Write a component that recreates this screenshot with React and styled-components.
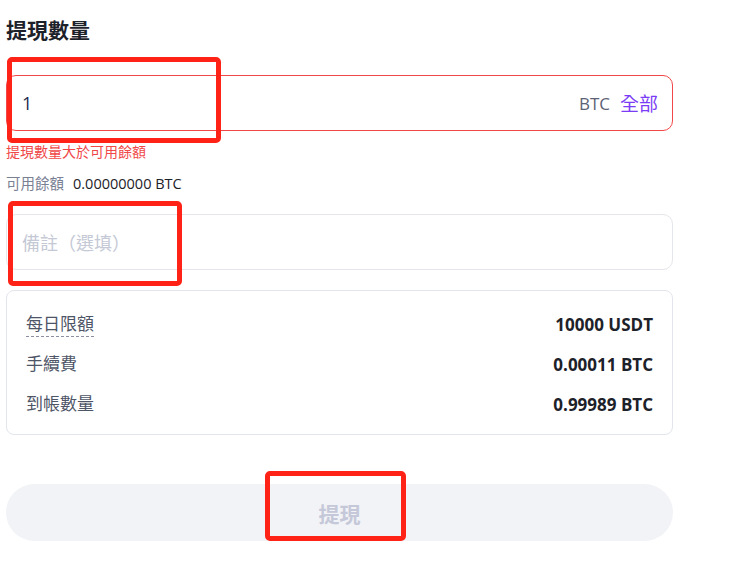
import React from "react";
import styled, { createGlobalStyle } from "styled-components";

const Global = createGlobalStyle`
  html, body { margin: 0; padding: 0; background: #ffffff; }
  body { font-family: "Open Sans", "Noto Sans CJK TC", sans-serif; color: #1d2129; }
  * { box-sizing: border-box; }
`;

const Page = styled.div`
  position: relative;
  width: 753px;
  height: 574px;
  padding: 16px 80px 0 6px;
`;

const Title = styled.h1`
  margin: 0;
  font-size: 21px;
  line-height: 28px;
  font-weight: 700;
  color: #1d2129;
`;

const Field = styled.div`
  margin-top: ${(p) => p.$top}px;
  height: 56px;
  border: 1px solid ${(p) => (p.$error ? "#f04848" : "#e5e6eb")};
  border-radius: 10px;
  display: flex;
  align-items: center;
  padding: 0 14px 0 15px;
  gap: 10px;
`;

const Value = styled.span`
  flex: 1;
  font-size: 18px;
  color: ${(p) => (p.$placeholder ? "#c5c9d6" : "#1d2b4d")};
`;

const Unit = styled.span`
  font-size: 17px;
  color: #5c6275;
`;

const AllLink = styled.span`
  font-size: 19px;
  color: #7b3cf5;
`;

const ErrorText = styled.div`
  margin-top: 12px;
  font-size: 14px;
  line-height: 18px;
  color: #f04848;
`;

const BalanceRow = styled.div`
  margin-top: 14px;
  display: flex;
  gap: 9px;
  font-size: 14.5px;
  line-height: 18px;
`;

const BalanceLabel = styled.span`
  color: #7a8094;
`;

const BalanceValue = styled.span`
  color: #1d2129;
  font-weight: 500;
`;

const Card = styled.div`
  margin-top: 20px;
  height: 145px;
  border: 1px solid #e3e5ec;
  border-radius: 8px;
  padding: 13px 19px 10px;
  display: flex;
  flex-direction: column;
`;

const Row = styled.div`
  height: 40px;
  display: flex;
  align-items: center;
  justify-content: space-between;
`;

const Label = styled.span`
  font-size: 17px;
  line-height: 22px;
  color: #4e5567;
  border-bottom: ${(p) => (p.$dashed ? "1px dashed #8a8fa3" : "none")};
  padding-bottom: ${(p) => (p.$dashed ? "1px" : "0")};
  margin-top: ${(p) => (p.$dashed ? "2px" : "0")};
`;

const Amount = styled.span`
  font-size: 17px;
  font-weight: 700;
  color: #1d2129;
`;

const SubmitButton = styled.button`
  margin-top: 49px;
  width: 100%;
  height: 57px;
  border: none;
  border-radius: 29px;
  background: #f2f3f7;
  color: #c5c8d8;
  font-family: "Open Sans", "Noto Sans CJK TC", sans-serif;
  font-size: 21px;
  font-weight: 700;
`;

const Annotation = styled.div`
  position: absolute;
  left: ${(p) => p.$x}px;
  top: ${(p) => p.$y}px;
  width: ${(p) => p.$w}px;
  height: ${(p) => p.$h}px;
  border: 5px solid #ff2217;
  border-radius: 5px;
  pointer-events: none;
`;

export default function App() {
  return (
    <>
      <Global />
      <Page>
        <Title>提現數量</Title>
        <Field $top={31} $error>
          <Value>1</Value>
          <Unit>BTC</Unit>
          <AllLink>全部</AllLink>
        </Field>
        <ErrorText>提現數量大於可用餘額</ErrorText>
        <BalanceRow>
          <BalanceLabel>可用餘額</BalanceLabel>
          <BalanceValue>0.00000000 BTC</BalanceValue>
        </BalanceRow>
        <Field $top={21}>
          <Value $placeholder>備註（選填）</Value>
        </Field>
        <Card>
          <Row>
            <Label $dashed>每日限額</Label>
            <Amount>10000 USDT</Amount>
          </Row>
          <Row>
            <Label>手續費</Label>
            <Amount>0.00011 BTC</Amount>
          </Row>
          <Row>
            <Label>到帳數量</Label>
            <Amount>0.99989 BTC</Amount>
          </Row>
        </Card>
        <SubmitButton>提現</SubmitButton>
        <Annotation $x={7} $y={57} $w={214} $h={86} />
        <Annotation $x={8} $y={201} $w={174} $h={85} />
        <Annotation $x={265} $y={471} $w={141} $h={70} />
      </Page>
    </>
  );
}
